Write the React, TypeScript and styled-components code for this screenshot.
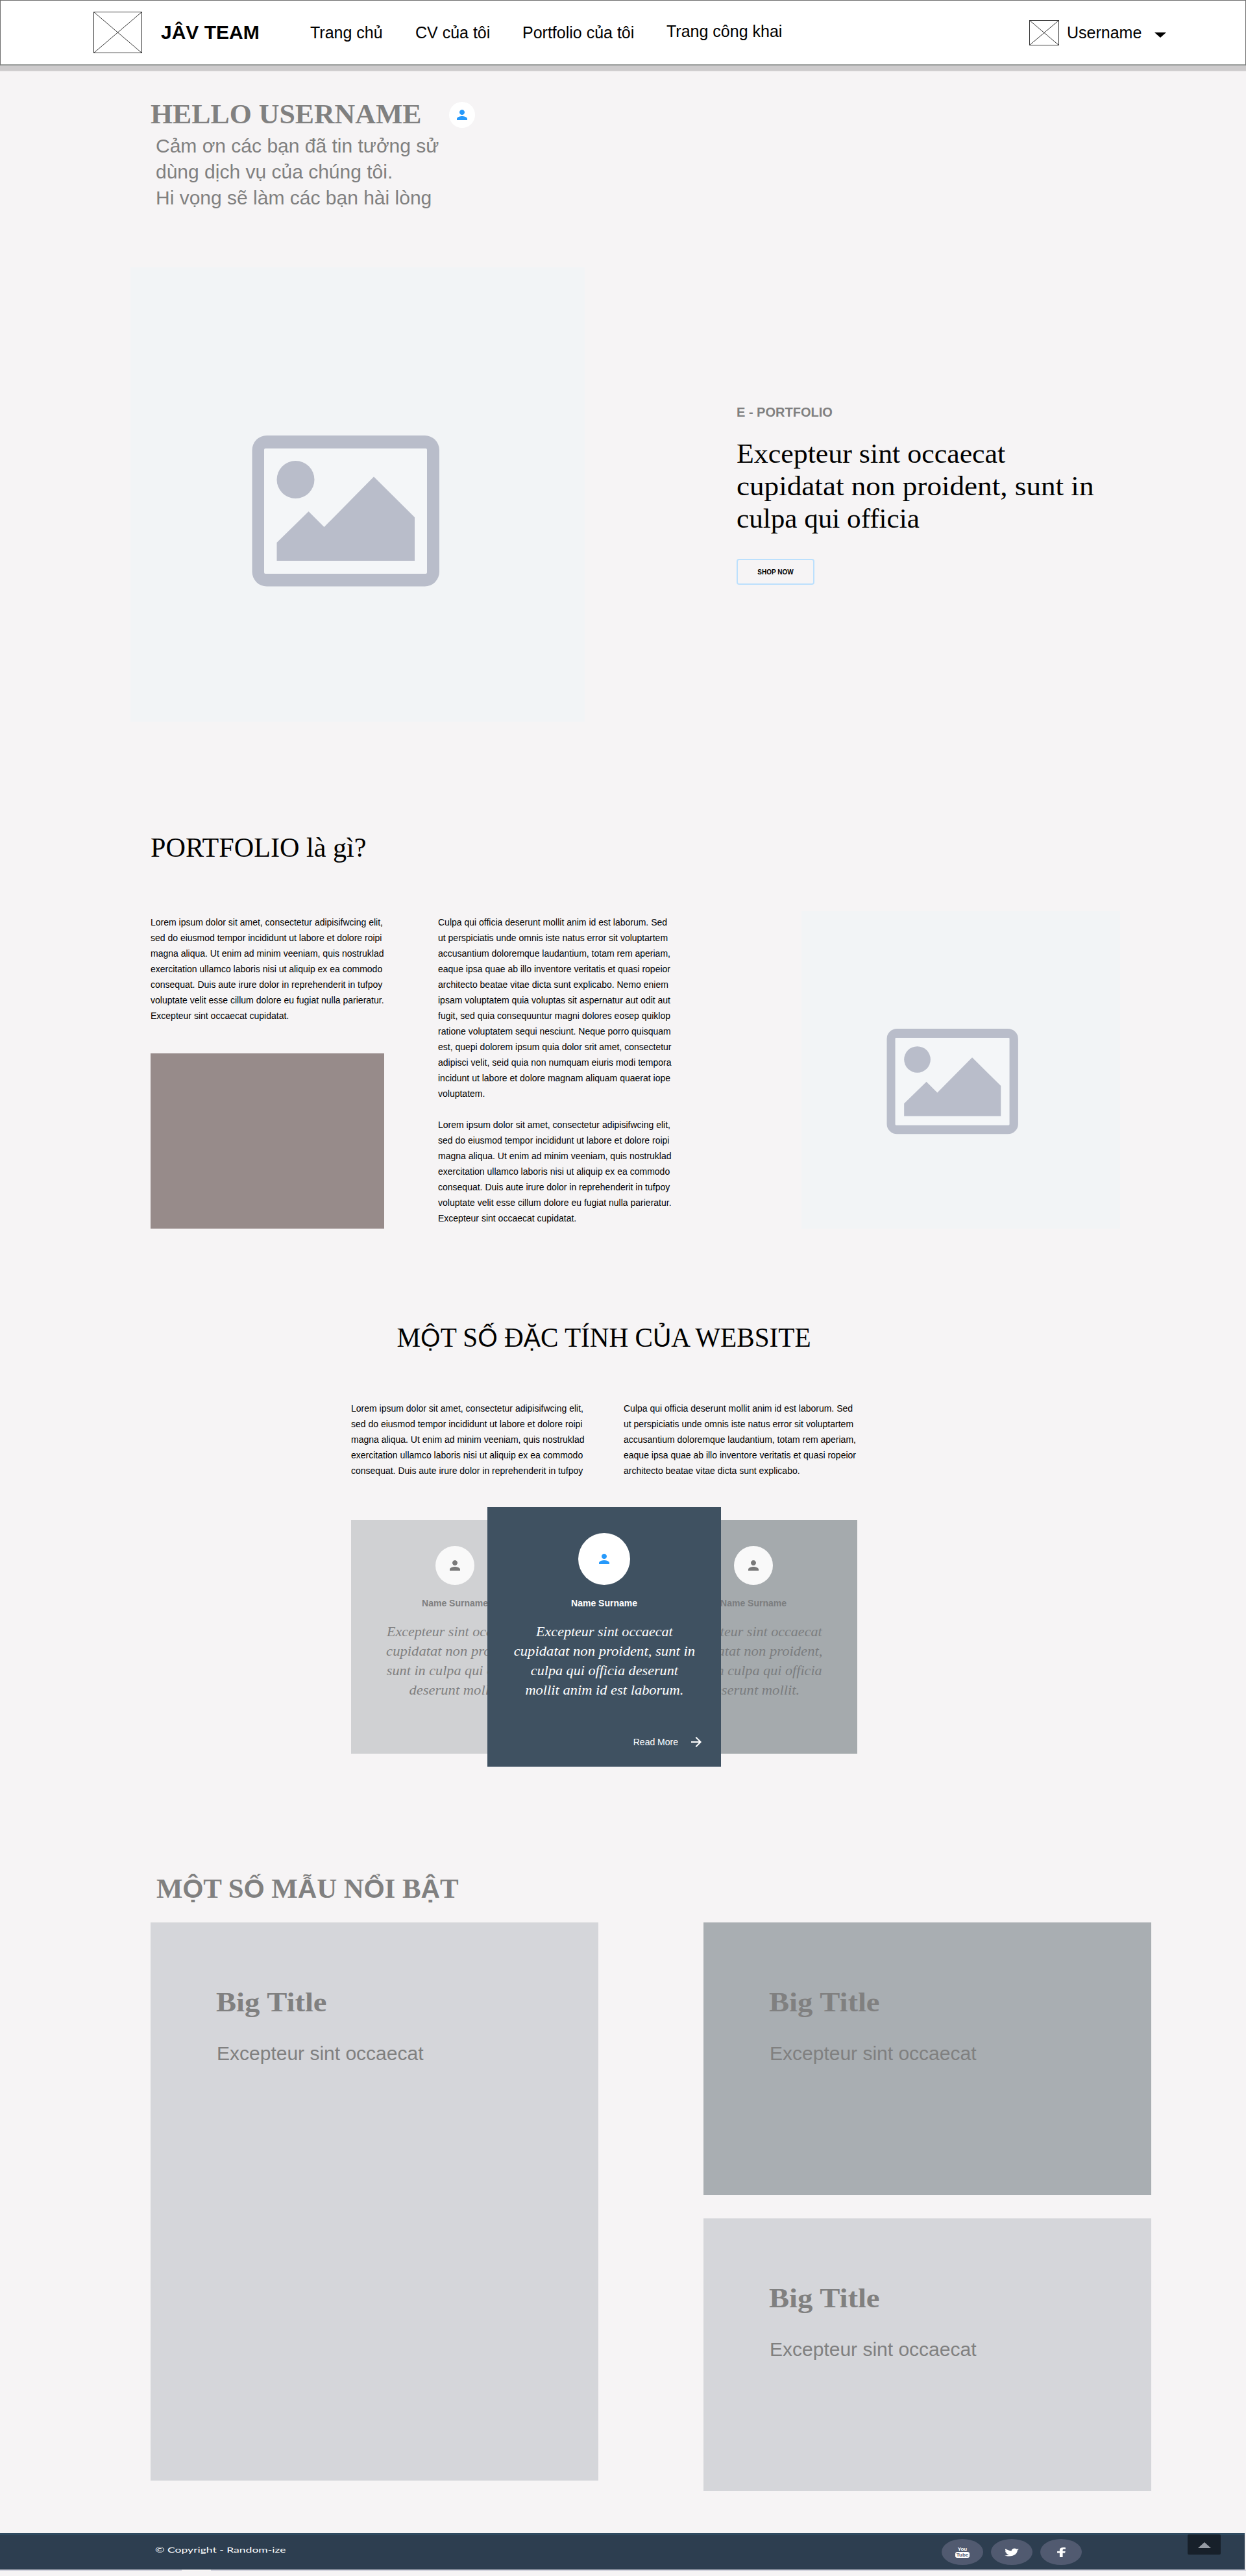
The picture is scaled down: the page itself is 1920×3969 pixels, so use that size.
import React from "react";
import styled, { createGlobalStyle } from "styled-components";
import { FaFacebookF, FaTwitter } from "react-icons/fa";
import { MdArrowForward } from "react-icons/md";

const sans = `"Liberation Sans", Arial, sans-serif`;
const serif = `Georgia, "Liberation Serif", serif`;

const GlobalStyle = createGlobalStyle`
  * { box-sizing: border-box; }
  body { margin: 0; background: #f6f4f5; font-family: ${sans}; color: #000; }
  h1, h2, h3, p { margin: 0; font-weight: 400; }
`;

const Page = styled.div`
  width: 1920px;
  height: 3969px;
  overflow: hidden;
  background: #f6f4f5;
`;

/* ---------- header ---------- */
const Header = styled.header`
  height: 110px;
  background: #cdcbcc;
  border-bottom: 1px solid #e4e2e3;
`;
const Bar = styled.div`
  height: 101px;
  display: grid;
  grid-template-columns: 104px 230px 162px 165px 222px 559px 58px 135px auto;
  align-items: center;
  padding-left: 143px;
  background: #fff;
  border: 1px solid #6c6c6c;
  border-bottom: 2px solid #9a9d9b;
`;
const Brand = styled.div`
  font-size: 30px;
  font-weight: 700;
  white-space: nowrap;
`;
const NavItem = styled.a<{ $raise?: number }>`
  font-size: 25px;
  line-height: 28px;
  white-space: nowrap;
  padding-bottom: ${(p) => p.$raise ?? 0}px;
`;
const Caret = styled.span`
  width: 0;
  margin-top: 8px;
  border: 9px solid transparent;
  border-top: 8px solid #000;
  border-bottom: 0;
`;

const Crossed = ({ w, h }: { w: number; h: number }) => (
  <svg width={w} height={h} viewBox={`0 0 ${w} ${h}`} fill="none" stroke="#333" strokeWidth="1">
    <rect x=".5" y=".5" width={w - 1} height={h - 1} />
    <path d={`M0 0L${w} ${h}M${w} 0L0 ${h}`} />
  </svg>
);

/* ---------- text ---------- */
const Line = styled.span<{ $stretch: number; $origin?: string }>`
  display: block;
  white-space: nowrap;
  transform: scaleX(${(p) => p.$stretch});
  transform-origin: ${(p) => p.$origin ?? "left"} center;
`;
const Heading = styled.h2<{ $bold?: boolean; $muted?: boolean }>`
  font-family: ${serif};
  font-size: 42px;
  line-height: 50px;
  font-weight: ${(p) => (p.$bold ? 700 : 400)};
  color: ${(p) => (p.$muted ? "#808080" : "#000")};
`;
const SansGlyph = styled.span`
  font-family: ${sans};
  font-size: 40px;
  line-height: 1;
`;
/* Stacked Vietnamese diacritics are set in the sans face. */
const Mixed = ({ text }: { text: string }) => (
  <>
    {text.split(/([\u1E00-\u1EFF])/).map((part, i) =>
      i % 2 ? <SansGlyph key={i}>{part}</SansGlyph> : part
    )}
  </>
);
const Body = styled.p`
  font-size: 14px;
  line-height: 24px;
  white-space: pre;
`;
const Lead = styled.p`
  font-size: 30px;
  line-height: 40px;
  white-space: pre;
  color: #808080;
`;

/* ---------- avatar ---------- */
const Circle = styled.div<{ $size: number; $fill: string }>`
  flex: none;
  width: ${(p) => p.$size}px;
  height: ${(p) => p.$size}px;
  border-radius: 50%;
  background: ${(p) => p.$fill};
  display: flex;
  justify-content: center;
  align-items: center;
`;
const Avatar = ({ size, fill = "#fff", color = "#2699fb" }: { size: number; fill?: string; color?: string }) => (
  <Circle $size={size} $fill={fill}>
    <svg width="16" height="16" viewBox="4 4 16 16" fill={color}>
      <path d="M12 12c2.21 0 4-1.79 4-4s-1.79-4-4-4-4 1.79-4 4 1.79 4 4 4zm0 2c-2.67 0-8 1.34-8 4v2h16v-2c0-2.66-5.33-4-8-4z" />
    </svg>
  </Circle>
);

/* ---------- hello ---------- */
const Hello = styled.section`
  padding: 41px 0 0 232px;
`;
const HelloRow = styled.div`
  display: grid;
  grid-template-columns: 460px 40px;
  align-items: start;
  & > div { margin-top: 6px; }
`;
const HelloText = styled(Lead)`
  margin: 4px 0 0 8px;
`;

/* ---------- feature ---------- */
const Placeholder = styled.div<{ $w: number; $h: number }>`
  width: ${(p) => p.$w}px;
  height: ${(p) => p.$h}px;
  background: #f2f4f6;
  svg { display: block; }
`;
const PictureBox = ({ w, h }: { w: number; h: number }) => (
  <Placeholder $w={w} $h={h}>
    <svg width={w} height={h} viewBox="0 0 700 700" preserveAspectRatio="none">
      <rect x="205" y="278" width="253" height="195" fill="#f4f6f8" />
      <g fill="#b9bdca">
        <path fillRule="evenodd" d="M210 259H453.500A22.500 22.500 0 0 1 476 281.500V469A22.500 22.500 0 0 1 453.500 491.500H210A22.500 22.500 0 0 1 187.500 469V281.500A22.500 22.500 0 0 1 210 259ZM208 279A2 2 0 0 0 206 281V470A2 2 0 0 0 208 472H455A2 2 0 0 0 457 470V281A2 2 0 0 0 455 279Z" />
        <circle cx="254.500" cy="327" r="29" />
        <path d="M225.500 424L274.500 376L298.500 400L375 322.500L438 385V452H225.500Z" />
      </g>
    </svg>
  </Placeholder>
);
const Feature = styled.section`
  display: flex;
  gap: 234px;
  padding: 87px 0 0 201px;
`;
const FeatureCopy = styled.div`
  padding-top: 211px;
`;
const Eyebrow = styled.h3`
  font-size: 20px;
  line-height: 24px;
  font-weight: 700;
  color: #808080;
  margin-bottom: 27px;
`;
const Button = styled.button`
  display: block;
  width: 120px;
  height: 40px;
  margin-top: 37px;
  padding: 0;
  background: transparent;
  border: 2px solid #bce0fd;
  border-radius: 4px;
  font: 700 10px ${sans};
  color: #000;
`;

/* ---------- about ---------- */
const About = styled.section`
  padding: 169px 0 0 232px;
`;
const AboutGrid = styled.div`
  display: grid;
  grid-template-columns: 443px 560px auto;
  align-items: start;
  margin-top: 73px;
`;
const Column = styled.div`
  padding-top: 5px;
`;
const Swatch = styled.div`
  width: 360px;
  height: 270px;
  margin-top: 46px;
  background: #978b8a;
`;

/* ---------- traits ---------- */
const Traits = styled.section`
  width: 780px;
  margin: 143px 0 0 541px;
`;
const CenterHeading = styled(Heading)`
  display: flex;
  justify-content: center;
`;
const TwoColumns = styled.div`
  display: grid;
  grid-template-columns: 420px 360px;
  margin-top: 72px;
`;
const Cards = styled.div`
  display: flex;
  align-items: center;
  margin-top: 44px;
`;
const Card = styled.article<{ $bg: string; $ink: string; $main?: boolean }>`
  flex: none;
  display: flex;
  flex-direction: column;
  align-items: center;
  width: ${(p) => (p.$main ? 360 : 320)}px;
  height: ${(p) => (p.$main ? 400 : 360)}px;
  padding-top: 40px;
  margin: 0 ${(p) => (p.$main ? -110 : 0)}px;
  z-index: ${(p) => (p.$main ? 1 : 0)};
  background: ${(p) => p.$bg};
  color: ${(p) => p.$ink};
`;
const PersonName = styled.h3`
  && { font-weight: 700; }
  font-size: 14px;
  line-height: 20px;
  margin-top: 18px;
`;
const Quote = styled.blockquote`
  margin: 19px 0 0;
  font: italic 21px/30px ${serif};
`;
const QuoteLine = styled(Line)`
  display: flex;
  justify-content: center;
`;
const ReadMore = styled.a`
  align-self: flex-end;
  display: flex;
  align-items: center;
  gap: 16px;
  margin: 53px 26px 0 0;
  font-size: 14px;
`;

type QuoteRow = [string, number];
const shortQuote: QuoteRow[] = [
  ["Excepteur sint occaecat", 1.05],
  ["cupidatat non proident,", 1.078],
  ["sunt in culpa qui officia", 1.057],
  ["deserunt mollit.", 1.075],
];
const longQuote: QuoteRow[] = [
  ["Excepteur sint occaecat", 1.05],
  ["cupidatat non proident, sunt in", 1.08],
  ["culpa qui officia deserunt", 1.055],
  ["mollit anim id est laborum.", 1.07],
];
const QuoteText = ({ rows }: { rows: QuoteRow[] }) => (
  <Quote>
    {rows.map(([t, s]) => (
      <QuoteLine key={t} $stretch={s} $origin="center">{t}</QuoteLine>
    ))}
  </Quote>
);

/* ---------- samples ---------- */
const Samples = styled.section`
  padding: 163px 0 0 232px;
`;
const SampleHeading = styled(Heading)`
  padding-left: 9px;
`;
const SampleGrid = styled.div`
  display: grid;
  grid-template-columns: 690px 690px;
  column-gap: 162px;
  align-items: start;
  margin-top: 27px;
`;
const Stack = styled.div`
  display: grid;
  gap: 36px;
`;
const Tile = styled.article<{ $h: number; $bg: string }>`
  height: ${(p) => p.$h}px;
  padding: 98px 0 0 101px;
  background: ${(p) => p.$bg};
`;
const TileText = styled(Lead)`
  margin: 34px 0 0 1px;
`;
const Sample = ({ h, bg }: { h: number; bg: string }) => (
  <Tile $h={h} $bg={bg}>
    <Heading as="h3" $bold $muted><Line $stretch={1.11}>Big Title</Line></Heading>
    <TileText>Excepteur sint occaecat</TileText>
  </Tile>
);

/* ---------- footer ---------- */
const Footer = styled.footer`
  display: grid;
  grid-template-columns: 1212px 379px auto;
  align-items: start;
  width: 1918px;
  height: 56px;
  margin-top: 65px;
  padding-left: 239px;
  background: #2d3e50;
  border-top: 3px solid #2f4a60;
`;
const Copyright = styled.p`
  padding-top: 15px;
  font: 12px/16px Lato, sans-serif;
  color: #fff;
`;
const Socials = styled.div`
  display: flex;
  gap: 12px;
  padding-top: 6px;
`;
const Social = styled.a`
  width: 64px;
  height: 40px;
  border-radius: 50%;
  background: #515a70;
  color: #fff;
  display: flex;
  flex-direction: column;
  align-items: center;
  justify-content: center;
`;
const Twitter = styled(FaTwitter)`
  width: 22px;
  height: 15px;
`;
const Facebook = styled(FaFacebookF)`
  width: 15px;
  height: 15px;
`;
const You = styled.span`
  font: 700 8px/8px ${sans};
`;
const Tube = styled.span`
  width: 22px;
  height: 9px;
  border-radius: 3px;
  background: #fff;
  color: #515a70;
  text-align: center;
  font: 700 8px/9px ${sans};
`;
const ToTop = styled.button`
  display: flex;
  justify-content: center;
  align-items: center;
  width: 51px;
  height: 31px;
  margin-top: -1px;
  padding: 2px 0 0;
  border: 0;
  border-radius: 2px;
  background: #17202a;
`;
const Shelf = styled.div`
  height: 2px;
  padding-left: 280px;
  background: #d5d5df;
  &::before {
    content: "";
    display: block;
    width: 45px;
    height: 2px;
    background: #f6f4f5;
  }
`;

const lorem = `Lorem ipsum dolor sit amet, consectetur adipisifwcing elit,
sed do eiusmod tempor incididunt ut labore et dolore roipi
magna aliqua. Ut enim ad minim veeniam, quis nostruklad
exercitation ullamco laboris nisi ut aliquip ex ea commodo
consequat. Duis aute irure dolor in reprehenderit in tufpoy`;
const loremFull = `${lorem}
voluptate velit esse cillum dolore eu fugiat nulla parieratur.
Excepteur sint occaecat cupidatat.`;
const culpa = `Culpa qui officia deserunt mollit anim id est laborum. Sed
ut perspiciatis unde omnis iste natus error sit voluptartem
accusantium doloremque laudantium, totam rem aperiam,
eaque ipsa quae ab illo inventore veritatis et quasi ropeior
architecto beatae vitae dicta sunt explicabo.`;
const culpaFull = `${culpa} Nemo eniem
ipsam voluptatem quia voluptas sit aspernatur aut odit aut
fugit, sed quia consequuntur magni dolores eosep quiklop
ratione voluptatem sequi nesciunt. Neque porro quisquam
est, quepi dolorem ipsum quia dolor srit amet, consectetur
adipisci velit, seid quia non numquam eiuris modi tempora
incidunt ut labore et dolore magnam aliquam quaerat iope
voluptatem.`;

export default function App() {
  return (
    <Page>
      <GlobalStyle />
      <Header>
        <Bar>
          <Crossed w={75} h={64} />
          <Brand>JÂV TEAM</Brand>
          <NavItem>Trang chủ</NavItem>
          <NavItem>CV của tôi</NavItem>
          <NavItem>Portfolio của tôi</NavItem>
          <NavItem $raise={4}>Trang công khai</NavItem>
          <Crossed w={46} h={39} />
          <NavItem>Username</NavItem>
          <Caret />
        </Bar>
      </Header>

      <Hello>
        <HelloRow>
          <Heading as="h1" $bold $muted><Line $stretch={1.043}>HELLO USERNAME</Line></Heading>
          <Avatar size={40} />
        </HelloRow>
        <HelloText>{`Cảm ơn các bạn đã tin tưởng sử
dùng dịch vụ của chúng tôi.
Hi vọng sẽ làm các bạn hài lòng`}</HelloText>
      </Hello>

      <Feature>
        <PictureBox w={700} h={700} />
        <FeatureCopy>
          <Eyebrow>E - PORTFOLIO</Eyebrow>
          <Heading>
            <Line $stretch={1.045}>Excepteur sint occaecat</Line>
            <Line $stretch={1.075}>cupidatat non proident, sunt in</Line>
            <Line $stretch={1.027}>culpa qui officia</Line>
          </Heading>
          <Button>SHOP NOW</Button>
        </FeatureCopy>
      </Feature>

      <About>
        <Heading><Line $stretch={1.004}>PORTFOLIO là gì?</Line></Heading>
        <AboutGrid>
          <Column>
            <Body>{loremFull}</Body>
            <Swatch />
          </Column>
          <Column>
            <Body>{`${culpaFull}\n\n${loremFull}`}</Body>
          </Column>
          <PictureBox w={491} h={489} />
        </AboutGrid>
      </About>

      <Traits>
        <CenterHeading>
          <Line $stretch={0.98} $origin="center"><Mixed text="MỘT SỐ ĐẶC TÍNH CỦA WEBSITE" /></Line>
        </CenterHeading>
        <TwoColumns>
          <Body>{lorem}</Body>
          <Body>{culpa}</Body>
        </TwoColumns>
        <Cards>
          <Card $bg="#d0d1d3" $ink="#7f7f80">
            <Avatar size={60} fill="#f9f9f9" color="#7a7a7a" />
            <PersonName>Name Surname</PersonName>
            <QuoteText rows={shortQuote} />
          </Card>
          <Card $bg="#3f5161" $ink="#fff" $main>
            <Avatar size={80} />
            <PersonName>Name Surname</PersonName>
            <QuoteText rows={longQuote} />
            <ReadMore>Read More <MdArrowForward size={24} /></ReadMore>
          </Card>
          <Card $bg="#a5aaad" $ink="#7b7d7f">
            <Avatar size={60} fill="#f9f9f9" color="#7a7a7a" />
            <PersonName>Name Surname</PersonName>
            <QuoteText rows={shortQuote} />
          </Card>
        </Cards>
      </Traits>

      <Samples>
        <SampleHeading $bold $muted>
          <Line $stretch={1.021}><Mixed text="MỘT SỐ MẪU NỔI BẬT" /></Line>
        </SampleHeading>
        <SampleGrid>
          <Sample h={860} bg="#d5d6da" />
          <Stack>
            <Sample h={420} bg="#a9aeb2" />
            <Sample h={420} bg="#d5d6da" />
          </Stack>
        </SampleGrid>
      </Samples>

      <Footer>
        <Copyright><Line $stretch={1.46}>© Copyright - Random-ize</Line></Copyright>
        <Socials>
          <Social><You>You</You><Tube>Tube</Tube></Social>
          <Social><Twitter preserveAspectRatio="none" /></Social>
          <Social><Facebook preserveAspectRatio="none" /></Social>
        </Socials>
        <ToTop>
          <svg width="20" height="9" viewBox="0 0 20 9" fill="#959ba4"><path d="M10 0L20 9H0Z" /></svg>
        </ToTop>
      </Footer>
      <Shelf />
    </Page>
  );
}
